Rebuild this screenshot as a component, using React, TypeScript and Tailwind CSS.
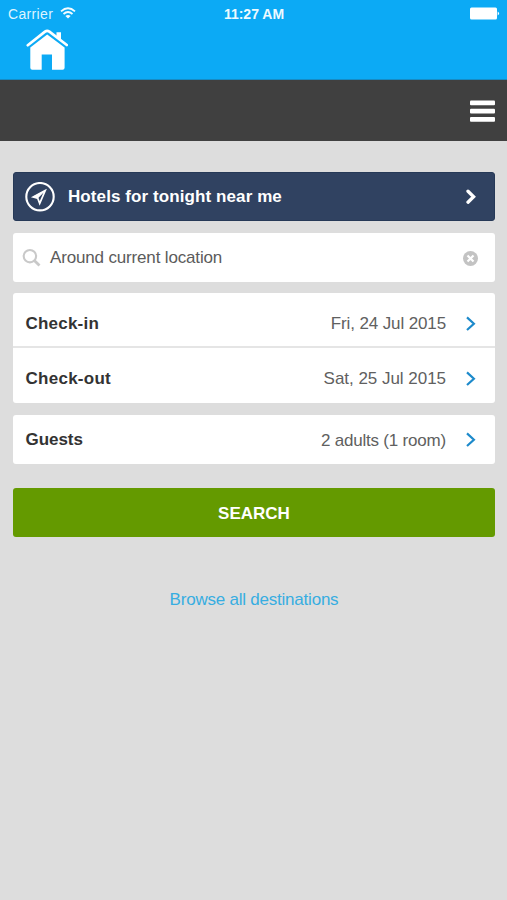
import React from "react";

function Chevron({ bold = false }: { bold?: boolean }) {
  return (
    <svg width="12" height="16" viewBox="0 0 12 16" fill="none" className={bold ? "text-white" : "text-[#1d8acb]"}>
      {bold ? (
        <path d="M3 2.2 L8.6 7.7 L3 13.2" stroke="currentColor" strokeWidth="3.3" strokeLinecap="round" />
      ) : (
        <path d="M2 1.4 L8.9 7.7 L2 14" stroke="currentColor" strokeWidth="2.2" />
      )}
    </svg>
  );
}

function Row({ label, value, valueClass, labelClass, className }: { label: string; value: string; valueClass: string; labelClass: string; className: string }) {
  return (
    <div className={`flex items-center pl-[12.5px] pr-[18px] ${className}`}>
      <span className={`flex-1 text-[17px] font-bold text-[#333] ${labelClass}`}>{label}</span>
      <span className={`text-[17px] text-[#606060] ${valueClass}`}>{value}</span>
      <span className="ml-[19px] flex">
        <Chevron />
      </span>
    </div>
  );
}

export default function App() {
  return (
    <div className="flex h-[900px] w-[507px] flex-col overflow-hidden bg-[#dddddd] font-['Liberation_Sans',Arial,sans-serif] whitespace-nowrap">
      <header className="flex h-[80px] flex-col border-b border-[#168bc4] bg-[#0caaf5]">
        <div className="grid h-7 grid-cols-3 items-center pl-2 pr-[7px] text-sm leading-7 text-white">
          <div className="flex items-center gap-[7px]">
            <span className="tracking-[0.35px] text-[#def4ff]">Carrier</span>
            <svg width="16" height="12" viewBox="0 0 16 12" fill="none" stroke="#f4fcff" strokeWidth="1.8" className="-mt-0.5">
              <path d="M1 4.4 Q8 -1.8 15 4.4" />
              <path d="M3.5 7 Q8 3.1 12.5 7" />
              <path d="M5.4 9 Q8 6.9 10.6 9 L8 11.6 Z" fill="#f4fcff" stroke="none" />
            </svg>
          </div>
          <span className="text-center font-bold text-[#eefaff]">11:27 AM</span>
          <svg width="31" height="13" viewBox="0 0 31 13" fill="white" className="-mt-px justify-self-end">
            <rect x="1" y="0.5" width="27" height="12" rx="1.5" />
            <path d="M28.7 4.5 Q31.5 6.5 28.7 8.5 Z" />
          </svg>
        </div>
        <svg width="42" height="42" viewBox="0 0 42 42" className="ml-[26px]" fill="white">
          <path d="M1.8 17.2 L19 3.6 Q21.2 2 23.4 3.6 L40.8 17" fill="none" stroke="white" strokeWidth="2.7" strokeLinecap="round" />
          <path d="M30.5 4.2 H35 V12.6 L30.5 9 Z" />
          <path d="M4.3 19.6 L21.2 6.4 L38.6 19.6 V39.8 Q38.6 41.8 36.6 41.8 H26 V26.5 H15.7 V41.8 H6.3 Q4.3 41.8 4.3 39.8 Z" />
        </svg>
      </header>
      <nav className="flex h-[61px] items-center justify-end bg-[#404040] pr-3">
        <svg width="25" height="22" viewBox="0 0 25 22" fill="white">
          <rect y="0.6" width="25" height="4.7" rx="1" />
          <rect y="8.8" width="25" height="4.7" rx="1" />
          <rect y="17" width="25" height="4.7" rx="1" />
        </svg>
      </nav>
      <main className="flex flex-col px-[13px] pr-3 pt-[31px]">
        <div className="flex h-[49px] items-center rounded-[3px] border border-[#263957] bg-[#304261] pl-[11px] pr-[17px] text-white">
          <svg width="30" height="30" viewBox="0 0 30 30" fill="none" stroke="white">
            <circle cx="15" cy="14.7" r="13.7" strokeWidth="2.1" />
            <path d="M20.2 8.6 L8.2 14.9 L12.7 16.2 L14.7 21.4 Z" strokeWidth="1.7" />
            <path d="M20.2 8.6 L8.2 14.9 L12.7 16.2 Z" fill="white" strokeWidth="0.6" />
          </svg>
          <span className="ml-[13px] flex-1 text-[17px] font-bold tracking-[0.09px]">Hotels for tonight near me</span>
          <Chevron bold />
        </div>
        <div className="mt-3 flex h-[49px] items-center rounded-[3px] bg-white pl-[9px] pr-[17px]">
          <svg width="19" height="19" viewBox="0 0 19 19" fill="none" stroke="#c9c9c9">
            <circle cx="7.9" cy="8.2" r="6.2" strokeWidth="2.1" />
            <path d="M12.3 12.5 L17.5 17.6" strokeWidth="2.8" />
          </svg>
          <span className="ml-[9px] flex-1 text-[17px] tracking-[-0.16px] text-[#5b5b5b]">Around current location</span>
          <svg width="15" height="15" viewBox="0 0 15 15" className="mt-0.5">
            <circle cx="7.5" cy="7.5" r="7.5" fill="#c3c3c3" />
            <path d="M4.5 4.5 L10.5 10.5 M10.5 4.5 L4.5 10.5" stroke="white" strokeWidth="2.2" />
          </svg>
        </div>
        <div className="mt-[11px] flex flex-col rounded-[3px] bg-white">
          <Row label="Check-in" value="Fri, 24 Jul 2015" labelClass="tracking-[0.22px]" valueClass="tracking-[-0.12px]" className="h-[55px] border-b-2 border-[#e5e5e5] pt-[8px]" />
          <Row label="Check-out" value="Sat, 25 Jul 2015" labelClass="tracking-[0.27px]" valueClass="tracking-[-0.03px]" className="h-[55px] pt-[6px]" />
        </div>
        <div className="mt-3 flex flex-col rounded-[3px] bg-white">
          <Row label="Guests" value="2 adults (1 room)" labelClass="tracking-[-0.05px]" valueClass="pt-[3px] tracking-[-0.2px]" className="h-[49px]" />
        </div>
        <button className="mt-6 h-[49px] rounded-[3px] bg-[#649a00] pt-0.5 text-[17px] font-bold text-white">SEARCH</button>
        <a className="mt-[51px] self-center text-[17px] leading-6 tracking-[-0.22px] text-[#37ade1]">Browse all destinations</a>
      </main>
    </div>
  );
}
